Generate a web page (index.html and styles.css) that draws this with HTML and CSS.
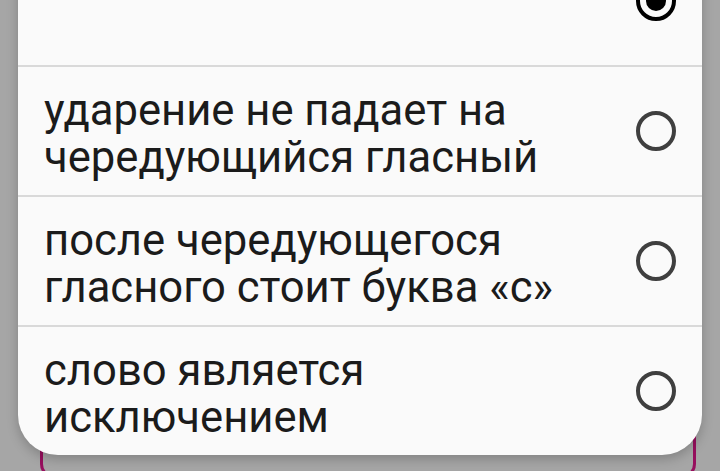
FILE: index.html
```html
<!DOCTYPE html>
<html lang="ru">
<head>
    <meta charset="UTF-8">
    <meta name="viewport" content="width=device-width, initial-scale=1.0">
    <title>Выберите вариант</title>
    <link rel="stylesheet" href="styles.css">
</head>
<body>
    <div class="page">
        <div class="card"></div>
    </div>

    <div class="dialog">
        <label class="option">
            <span class="option-text"></span>
            <span class="radio checked"></span>
        </label>
        <label class="option">
            <span class="option-text">ударение не падает на чередующийся гласный</span>
            <span class="radio"></span>
        </label>
        <label class="option">
            <span class="option-text">после чередующегося гласного стоит буква «с»</span>
            <span class="radio"></span>
        </label>
        <label class="option">
            <span class="option-text">слово является исключением</span>
            <span class="radio"></span>
        </label>
    </div>
</body>
</html>
```

FILE: styles.css
```css
html, body {
    margin: 0;
    padding: 0;
    height: 100%;
    overflow: hidden;
}
body {
    background-color: #a6a6a6; /* dimmed screen behind the dialog */
    font-family: Roboto, "Noto Sans", sans-serif;
    position: relative;
}
.page {
    padding: 300px 24px 0 40px;
}
.card {
    height: 172px;
    border: 3px solid #970f5e; /* magenta answer box */
    border-radius: 14px;
}

/* Dialog overlay, top part scrolled off screen */
.dialog {
    position: absolute;
    top: -63px;
    left: 18px;
    width: 684px;
    background-color: #fafafa;
    border-radius: 0 0 40px 40px;
    box-shadow: 0 4px 12px rgba(0, 0, 0, 0.22);
    overflow: hidden;
}
.option {
    display: flex;
    align-items: center;
    height: 128px;
    padding: 0 26px;
    border-bottom: 2px solid #d9d9d9;
}
.option:last-child {
    border-bottom: none;
}
.option-text {
    flex: 1;
    padding-top: 5px;
    font-size: 43.6px;
    line-height: 47px;
    color: #1b1b1b;
}
.radio {
    width: 32px;
    height: 32px;
    border: 4px solid #3f3f3f;
    border-radius: 50%;
    position: relative;
}
.radio.checked {
    border-color: #000000;
}
.radio.checked::after {
    content: "";
    position: absolute;
    left: 6px;
    top: 6px;
    width: 20px;
    height: 20px;
    border-radius: 50%;
    background-color: #000000;
}
```
